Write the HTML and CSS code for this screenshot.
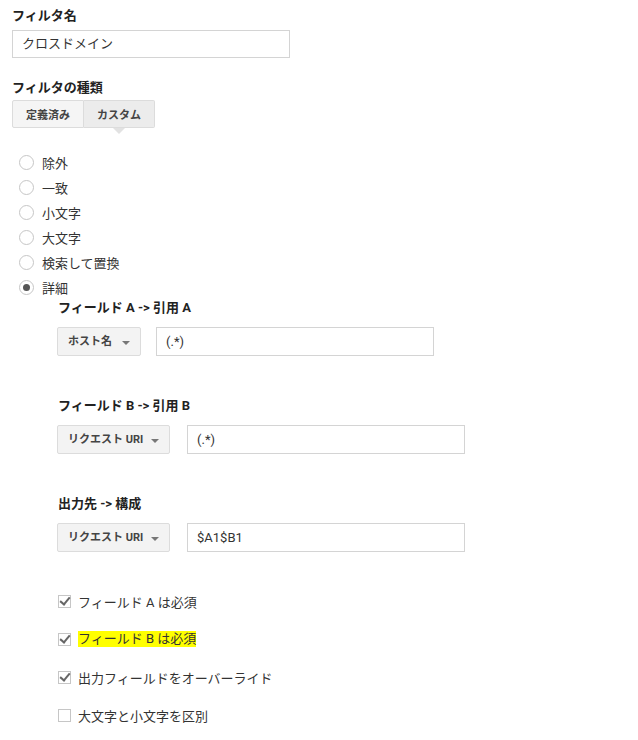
FILE: index.html
```html
<!DOCTYPE html>
<html lang="ja">
<head>
    <meta charset="UTF-8">
    <meta name="viewport" content="width=device-width, initial-scale=1.0">
    <title>フィルタ</title>
    <link rel="stylesheet" href="styles.css">
</head>
<body>
    <div class="form">
        <div class="label">フィルタ名</div>
        <div class="text-input name-input">クロスドメイン</div>

        <div class="label type-label">フィルタの種類</div>
        <div class="toggle">
            <button class="toggle-btn">定義済み</button>
            <button class="toggle-btn active">カスタム</button>
        </div>

        <ul class="radios">
            <li><span class="radio"></span>除外</li>
            <li><span class="radio"></span>一致</li>
            <li><span class="radio"></span>小文字</li>
            <li><span class="radio"></span>大文字</li>
            <li><span class="radio"></span>検索して置換</li>
            <li><span class="radio checked"></span>詳細</li>
        </ul>

        <div class="advanced">
            <div class="adv-row">
                <div class="label">フィールド A -&gt; 引用 A</div>
                <div class="adv-controls">
                    <div class="select sel-host">ホスト名 <span class="caret"></span></div>
                    <div class="text-input adv-input">(.*)</div>
                </div>
            </div>
            <div class="adv-row">
                <div class="label">フィールド B -&gt; 引用 B</div>
                <div class="adv-controls">
                    <div class="select sel-uri">リクエスト URI <span class="caret"></span></div>
                    <div class="text-input adv-input">(.*)</div>
                </div>
            </div>
            <div class="adv-row">
                <div class="label">出力先 -&gt; 構成</div>
                <div class="adv-controls">
                    <div class="select sel-uri">リクエスト URI <span class="caret"></span></div>
                    <div class="text-input adv-input">$A1$B1</div>
                </div>
            </div>

            <ul class="checks">
                <li><span class="check on"></span>フィールド A は必須</li>
                <li><span class="check on"></span><span class="mark">フィールド B は必須</span></li>
                <li><span class="check on"></span>出力フィールドをオーバーライド</li>
                <li><span class="check"></span>大文字と小文字を区別</li>
            </ul>
        </div>
    </div>
</body>
</html>
```

FILE: styles.css
```css
body {
    margin: 0;
    font-family: Roboto, "Noto Sans CJK JP", sans-serif;
    font-size: 13px;
    color: #222;
    background: white;
}

.form {
    padding: 8px 12px;
}

.label {
    font-weight: bold;
    line-height: 16px;
    color: #222;
}

.text-input {
    box-sizing: border-box;
    height: 28px;
    line-height: 26px;
    border: 1px solid #d4d4d4;
    padding: 0 9px;
    color: #333;
    background: white;
}

.name-input {
    width: 278px;
    margin-top: 6px;
}

.type-label {
    margin-top: 22px;
}

.toggle {
    display: flex;
    margin-top: 4px;
}

.toggle-btn {
    position: relative;
    height: 28px;
    padding: 0 13px;
    border: 1px solid #dcdcdc;
    background: #f5f5f5;
    font-family: inherit;
    font-size: 11px;
    font-weight: bold;
    color: #444;
    border-radius: 2px 0 0 2px;
}

.toggle-btn.active {
    background: #ececec;
    border-left: 0;
    border-radius: 0 2px 2px 0;
    padding: 0 13px;
}

.toggle-btn.active::after {
    content: "";
    position: absolute;
    left: 50%;
    bottom: -7px;
    margin-left: -6px;
    border-left: 6px solid transparent;
    border-right: 6px solid transparent;
    border-top: 6px solid #e2e2e2;
}

.radios {
    list-style: none;
    margin: 22px 0 0;
    padding: 0;
}

.radios li {
    display: flex;
    align-items: center;
    height: 25px;
    color: #333;
}

.radio {
    box-sizing: border-box;
    width: 15px;
    height: 15px;
    margin: 0 8px 0 7px;
    border: 1px solid #c6c6c6;
    border-radius: 50%;
    display: flex;
    align-items: center;
    justify-content: center;
}

.radio.checked::after {
    content: "";
    width: 7px;
    height: 7px;
    border-radius: 50%;
    background: #555;
}

.advanced {
    padding-left: 45px;
}

.adv-row {
    height: 98px;
}

.adv-row .label {
    padding-left: 1px;
}

.adv-controls {
    display: flex;
    gap: 15px;
    margin-top: 11px;
}

.select {
    box-sizing: border-box;
    height: 29px;
    line-height: 27px;
    padding: 0 10px;
    border: 1px solid #dcdcdc;
    border-radius: 2px;
    background: #f3f3f3;
    font-size: 11px;
    font-weight: bold;
    color: #444;
    display: flex;
    align-items: center;
}

.sel-host {
    width: 84px;
}

.sel-uri {
    width: 113px;
}

.sel-uri + .adv-input {
    margin-left: 2px;
}

.caret {
    margin-left: auto;
    border-left: 4px solid transparent;
    border-right: 4px solid transparent;
    border-top: 4px solid #777;
    margin-top: 2px;
}

.adv-input {
    width: 278px;
    height: 29px;
    line-height: 27px;
}

.checks {
    list-style: none;
    margin: -12px 0 0;
    padding: 0 0 0 1px;
}

.checks li {
    display: flex;
    align-items: center;
    height: 38px;
    color: #333;
}

.check {
    position: relative;
    box-sizing: border-box;
    width: 13px;
    height: 13px;
    margin: 0 7px 0 0;
    border: 1px solid #c6c6c6;
    background: white;
}

.check.on::after {
    content: "";
    position: absolute;
    left: 3px;
    top: -1px;
    width: 4px;
    height: 8px;
    border-right: 2px solid #666;
    border-bottom: 2px solid #666;
    transform: rotate(40deg);
}

.mark {
    background: #ffff00;
    line-height: 16px;
}
```
